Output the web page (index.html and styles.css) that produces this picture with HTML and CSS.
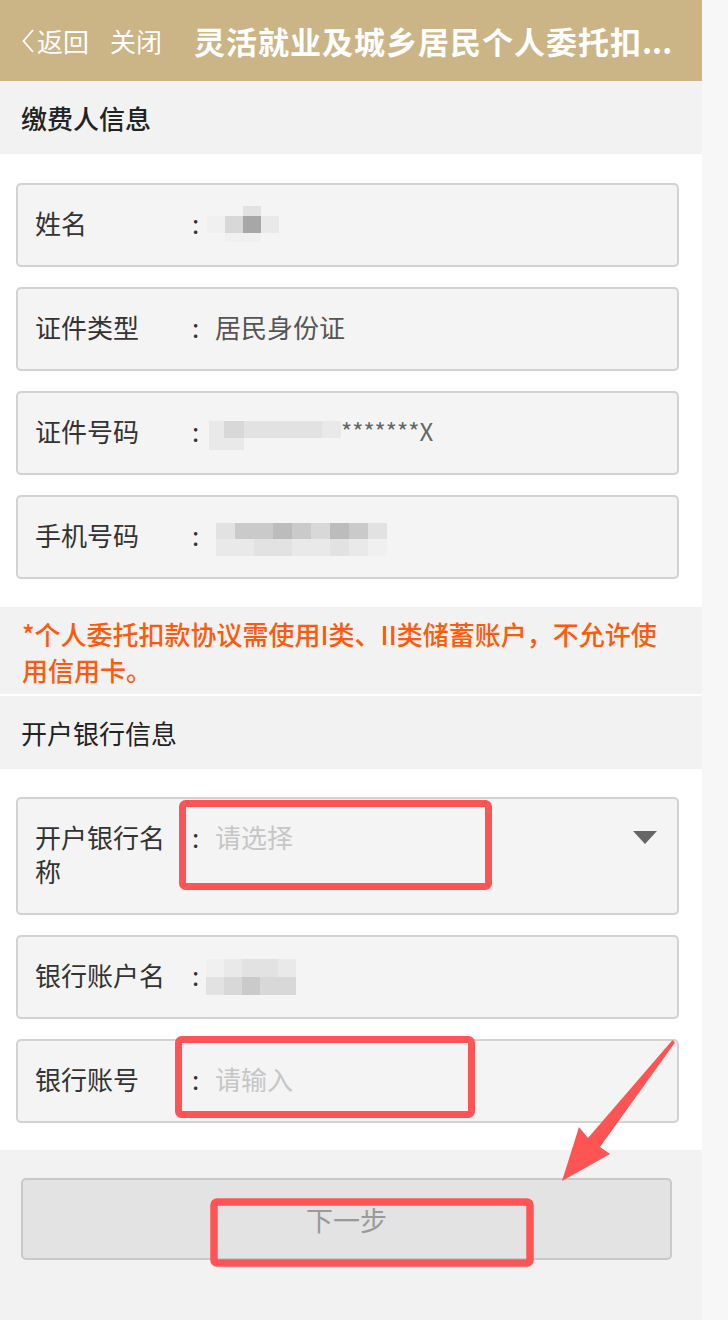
FILE: index.html
```html
<!DOCTYPE html>
<html lang="zh-CN">
<head>
<meta charset="utf-8">
<title>灵活就业及城乡居民个人委托扣款协议</title>
<link rel="stylesheet" href="styles.css">
</head>
<body>
<div class="page">
  <header class="nav">
    <span class="back"><svg class="chev" viewBox="0 0 12 24"><polyline points="11,1 1.5,12 11,23" fill="none" stroke="#fff" stroke-width="1.8"/></svg>返回</span>
    <span class="close">关闭</span>
    <h1 class="nav-title">灵活就业及城乡居民个人委托扣<span class="dots">...</span></h1>
  </header>

  <div class="sec-title strong">缴费人信息</div>
  <div class="fields">
    <div class="field">
      <div class="label">姓名</div><div class="colon">:</div>
      <div class="value">
        <div class="mosaic mz-name">
          <i></i><i></i><i class="c2"></i><i></i>
          <i class="c0"></i><i class="c3"></i><i class="c8"></i><i class="c1"></i>
          <i></i><i class="c0"></i><i class="c0"></i><i></i>
        </div>
      </div>
    </div>
    <div class="field">
      <div class="label">证件类型</div><div class="colon">:</div>
      <div class="value text">居民身份证</div>
    </div>
    <div class="field">
      <div class="label">证件号码</div><div class="colon">:</div>
      <div class="value">
        <div class="mosaic mz-id">
          <i class="c1"></i><i class="c3"></i><i class="c2"></i><i class="c2"></i><i class="c2"></i><i class="c2"></i><i class="c1"></i>
          <i class="c1"></i><i class="c1"></i><i></i><i></i><i></i><i></i><i></i>
        </div>
        <span class="masked">*******X</span>
      </div>
    </div>
    <div class="field">
      <div class="label">手机号码</div><div class="colon">:</div>
      <div class="value">
        <div class="mosaic mz-phone">
          <i class="c2"></i><i class="c4"></i><i class="c4"></i><i class="c5"></i><i class="c4"></i><i class="c3"></i><i class="c5"></i><i class="c4"></i><i class="c2"></i>
          <i class="c1"></i><i class="c1"></i><i class="c2"></i><i class="c2"></i><i class="c1"></i><i class="c1"></i><i class="c2"></i><i class="c1"></i><i class="c0"></i>
        </div>
      </div>
    </div>
  </div>

  <div class="notice">*个人委托扣款协议需使用I类、II类储蓄账户，不允许使用信用卡。</div>

  <div class="sec-title">开户银行信息</div>
  <div class="fields bank">
    <div class="field">
      <div class="label">开户银行名称</div><div class="colon">:</div>
      <div class="value placeholder">请选择</div>
      <span class="caret"></span>
    </div>
    <div class="field">
      <div class="label">银行账户名</div><div class="colon">:</div>
      <div class="value">
        <div class="mosaic mz-acct">
          <i class="c0"></i><i class="c1"></i><i class="c2"></i><i class="c2"></i><i class="c1"></i>
          <i class="c2"></i><i class="c3"></i><i class="c4"></i><i class="c3"></i><i class="c3"></i>
        </div>
      </div>
    </div>
    <div class="field">
      <div class="label">银行账号</div><div class="colon">:</div>
      <div class="value placeholder">请输入</div>
    </div>
  </div>

  <div class="footer">
    <button class="next" type="button">下一步</button>
  </div>
</div>

<svg class="annot" viewBox="0 0 728 1320" width="728" height="1320">
  <rect x="182.5" y="803.5" width="306" height="83" rx="3" fill="none" stroke="#ff5454" stroke-width="7"/>
  <rect x="178.5" y="1039.5" width="293" height="75" rx="3" fill="none" stroke="#ff5454" stroke-width="7"/>
  <rect x="214" y="1202" width="316" height="61" rx="3" fill="none" stroke="#ff5454" stroke-width="7.5"/>
  <polygon points="562,1181 579,1127 588,1138 672.5,1040 675,1042.5 600,1147 610,1154" fill="#ff5454"/>
</svg>
</body>
</html>
```

FILE: styles.css
```css
html, body {
  margin: 0;
  padding: 0;
}

body {
  position: relative;
  width: 728px;
  min-height: 1320px;
  background: #f7f7f7;
  font-family: "Noto Sans CJK SC", "Noto Sans", sans-serif;
  color: #333;
}

.page {
  width: 702px;
  min-height: 1320px;
  background: #fff;
  display: flex;
  flex-direction: column;
}

/* header */
.nav {
  flex: 0 0 81px;
  background: #cbb587;
  display: flex;
  align-items: center;
  color: #fff;
  padding-top: 1px;
  box-sizing: border-box;
  overflow: hidden;
  white-space: nowrap;
}

.back {
  flex-shrink: 0;
  display: flex;
  align-items: center;
  margin-left: 22px;
  font-size: 26px;
  line-height: 34px;
}

.chev {
  flex-shrink: 0;
  width: 12px;
  height: 24px;
  margin-right: 3px;
}

.close {
  flex-shrink: 0;
  margin-left: 21px;
  font-size: 26px;
  line-height: 34px;
}

.nav-title {
  flex-shrink: 0;
  margin: 0 0 0 32px;
  font-size: 31px;
  font-weight: 700;
  letter-spacing: 1px;
  line-height: 40px;
}

.dots {
  letter-spacing: 0;
  margin-left: 0;
}

/* section titles */
.sec-title {
  height: 73px;
  background: #f2f2f2;
  display: flex;
  align-items: center;
  padding-left: 21px;
  font-size: 26px;
  color: #222;
  flex-shrink: 0;
}

.sec-title.strong {
  font-weight: 500;
}

/* field lists */
.fields {
  background: #fff;
  padding: 29px 23px 28px 16px;
  display: flex;
  flex-direction: column;
  gap: 20px;
}

.fields.bank {
  padding-top: 28px;
  padding-bottom: 27px;
}

.field {
  display: flex;
  align-items: flex-start;
  border: 2px solid #d2d2d2;
  border-radius: 5px;
  background: #f4f4f4;
  padding: 21px 20px 25px 17px;
  font-size: 26px;
  line-height: 34px;
}

.label {
  flex: 0 0 150px;
  margin-right: 7px;
  color: #333;
}

.colon {
  width: 7px;
  color: #333;
}

.value {
  margin-left: 16px;
  height: 34px;
  display: flex;
  align-items: center;
}

.value.text {
  color: #555;
}

.value.placeholder {
  color: #c6c6c6;
}

.caret {
  margin-left: auto;
  margin-top: 11px;
  width: 0;
  height: 0;
  border-left: 12.5px solid transparent;
  border-right: 12.5px solid transparent;
  border-top: 13px solid #666;
}

.masked {
  color: #666;
  font-size: 24px;
}

/* mosaic (pixelated personal data) */
.mosaic {
  display: grid;
}

.mosaic i {
  display: block;
}

.mz-name {
  margin-left: -8px;
  grid-template-columns: repeat(4, 18px);
  grid-template-rows: 10px 17px 9px;
  margin-top: 2px;
}

.mz-id {
  margin-left: -6px;
  grid-template-columns: 15px repeat(6, 19.5px);
  grid-template-rows: 17px 12px;
  margin-top: 8px;
}

.mz-phone {
  margin-left: 1px;
  grid-template-columns: repeat(9, 19px);
  grid-template-rows: 16px 17px;
  margin-top: 8px;
}

.mz-acct {
  margin-left: -9px;
  grid-template-columns: repeat(5, 18px);
  grid-template-rows: 18px 18px;
  margin-top: 4px;
}

.c0 { background: #f0f0f0; }
.c1 { background: #e9e9e9; }
.c2 { background: #e2e2e2; }
.c3 { background: #d8d8d8; }
.c4 { background: #cacaca; }
.c5 { background: #bcbcbc; }
.c8 { background: #a7a7a7; }

/* notice */
.notice {
  background: #f2f2f2;
  color: #ff5a0a;
  font-size: 26px;
  font-weight: 500;
  line-height: 36px;
  padding: 9px 30px 6px 22px;
  margin-bottom: 2px;
}

/* footer */
.footer {
  flex: 1 0 auto;
  background: #f2f2f2;
  padding: 28px 30px 0 21px;
}

.next {
  display: block;
  width: 100%;
  height: 82px;
  border: 2px solid #c9c9c9;
  border-radius: 5px;
  background: #e3e3e3;
  color: #9a9a9a;
  font-family: inherit;
  font-size: 27px;
  padding: 0;
}

/* screenshot annotations */
.annot {
  position: absolute;
  left: 0;
  top: 0;
  pointer-events: none;
}
```
